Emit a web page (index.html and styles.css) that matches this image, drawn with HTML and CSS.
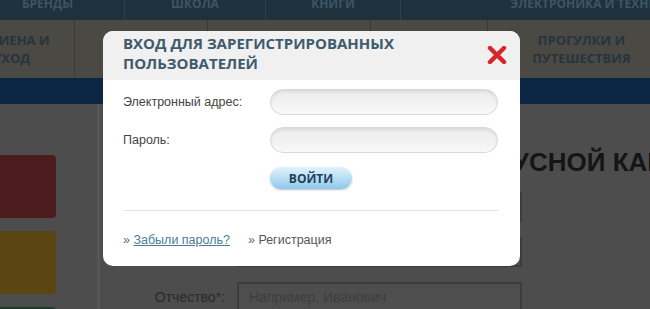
FILE: index.html
```html
<!DOCTYPE html>
<html>
<head>
    <meta charset="utf-8">
    <title>Вход</title>
    <link rel="stylesheet" href="styles.css">
</head>
<body>
    <!-- Верхнее меню -->
    <nav class="topnav">
        <a href="#">Бренды</a>
        <a href="#">Школа</a>
        <a href="#">Книги</a>
        <a href="#">Электроника и техника</a>
    </nav>

    <!-- Категории -->
    <nav class="catnav">
        <a href="#">Гигиена и<br>уход</a>
        <a href="#"></a>
        <a href="#"></a>
        <a href="#"></a>
        <a href="#">Прогулки и<br>путешествия</a>
    </nav>

    <div class="strip"></div>

    <div class="content">
        <aside class="side">
            <div class="tile tile-red"></div>
            <div class="tile tile-yellow"></div>
            <div class="tile tile-green"></div>
        </aside>

        <main class="reg">
            <h1>Регистрация вкусной карты</h1>
            <div class="field">
                <label>Фамилия*:</label>
                <input type="text" placeholder="Например, Иванов">
            </div>
            <div class="field">
                <label>Имя*:</label>
                <input type="text" placeholder="Например, Иван">
            </div>
            <div class="field">
                <label>Отчество*:</label>
                <input type="text" placeholder="Например, Иванович">
            </div>
        </main>
    </div>

    <!-- Окно входа -->
    <div class="modal">
        <div class="modal-head">
            <h2>Вход для зарегистрированных<br>пользователей</h2>
            <svg class="close" width="20" height="18" viewBox="0 0 20 18">
                <path d="M3 2 L17 16 M17 2 L3 16" stroke="#d8262c" stroke-width="4.5" stroke-linecap="round"/>
            </svg>
        </div>
        <div class="modal-body">
            <div class="rows">
                <div class="row">
                    <label>Электронный адрес:</label>
                    <input type="text">
                </div>
                <div class="row">
                    <label>Пароль:</label>
                    <input type="password">
                </div>
            </div>
            <div class="actions">
                <button class="btn">Войти</button>
            </div>
            <div class="sep"></div>
            <div class="links">
                <span><span class="raquo">»</span> <a href="#">Забыли пароль?</a></span>
                <span><span class="raquo">»</span> Регистрация</span>
            </div>
        </div>
    </div>
</body>
</html>
```

FILE: styles.css
```css
html {
    background-color: #4d4d4d;
}

body {
    margin: 0;
    width: 650px;
    height: 309px;
    overflow: hidden;
    position: relative;
    background-color: #4d4d4d;
    font-family: "Liberation Sans", Arial, sans-serif;
}

/* Верхнее меню */
.topnav {
    display: grid;
    grid-template-columns: 154px 141px 135px 384px;
    height: 20px;
    margin-left: -30px;
    background-color: #1d323c;
}

.topnav a {
    display: flex;
    justify-content: center;
    border-left: 1px solid #2b424e;
    color: #3d5664;
    font: 700 12px/8px "Open Sans", sans-serif;
    text-transform: uppercase;
    text-decoration: none;
    white-space: nowrap;
}

/* Категории */
.catnav {
    display: grid;
    grid-template-columns: 126px 133px 163px 117px 188px;
    height: 58px;
    margin-left: -52px;
    background-color: #4a4943;
}

.catnav a {
    display: flex;
    align-items: center;
    justify-content: center;
    text-align: center;
    border-left: 1px solid #3a3a36;
    color: #27343d;
    font: 700 13px/18px "Open Sans", sans-serif;
    text-transform: uppercase;
    text-decoration: none;
}

.strip {
    height: 26px;
    background-color: #0b2642;
}

.content {
    display: flex;
}

.side {
    width: 56px;
    flex: none;
    padding-top: 51px;
    display: flex;
    flex-direction: column;
    gap: 13px;
}

.tile {
    height: 63px;
    border-radius: 0 4px 4px 0;
}

.tile-red { background-color: #4b1b1e; }
.tile-yellow { background-color: #5b4611; }
.tile-green { background-color: #1c3d2c; }

.reg {
    flex: 1;
    margin-left: 41px;
    padding-top: 43px;
    border-left: 3px solid #575757;
}

.reg h1 {
    margin: 0 0 14px;
    padding-left: 178px;
    font: 700 26px/31px "Liberation Sans", Arial, sans-serif;
    color: #151515;
    text-transform: uppercase;
    white-space: nowrap;
}

.field {
    display: grid;
    grid-template-columns: 125px 285px;
    gap: 12px;
    align-items: center;
    margin-bottom: 15px;
}

.field label {
    text-align: right;
    font-size: 14px;
    color: #2a2a2a;
}

.field input {
    height: 30px;
    box-sizing: border-box;
    border: 2px solid #3c3c3c;
    background-color: #4e4e4e;
    padding: 0 10px;
    font: 14px "Liberation Sans", Arial, sans-serif;
}

.field input::placeholder {
    color: #3e3e3e;
}

/* Окно входа */
.modal {
    position: absolute;
    left: 103px;
    top: 31px;
    width: 417px;
    height: 235px;
    background-color: #fff;
    border-radius: 10px;
    overflow: hidden;
}

.modal-head {
    display: flex;
    justify-content: space-between;
    align-items: flex-start;
    height: 49px;
    box-sizing: border-box;
    padding: 2px 13px 0 20px;
    background-color: #f0f0f0;
}

.modal-head h2 {
    margin: 0;
    font: 700 15px/20px "Open Sans", sans-serif;
    color: #3e5a6d;
    text-transform: uppercase;
}

.close {
    margin-top: 13px;
}

.modal-body {
    padding: 9px 22px 0 20px;
}

.rows {
    display: flex;
    flex-direction: column;
    gap: 12px;
}

.row {
    display: grid;
    grid-template-columns: 147px 228px;
    align-items: center;
}

.row label {
    font-size: 12.5px;
    color: #444;
}

.row input {
    height: 26px;
    box-sizing: border-box;
    border: 1px solid #d8d8d8;
    border-radius: 13px;
    background: linear-gradient(#ebebeb, #f8f8f8);
    box-shadow: inset 0 2px 3px rgba(0, 0, 0, 0.08);
}

.actions {
    padding-left: 147px;
    margin-top: 14px;
}

.btn {
    display: block;
    width: 82px;
    height: 22px;
    border: 0;
    border-radius: 11px;
    background: linear-gradient(#e2f2fb, #b4dcf2 55%, #8fc7ea);
    box-shadow: 0 1px 2px rgba(0, 0, 0, 0.25);
    color: #22405c;
    font: 700 12px "Open Sans", sans-serif;
    text-transform: uppercase;
}

.sep {
    margin-top: 21px;
    border-top: 1px solid #e3e3e3;
}

.links {
    display: flex;
    gap: 18px;
    margin-top: 22px;
    font-size: 12.5px;
    line-height: 14px;
    color: #555;
}

.links a {
    color: #4d7c98;
}

.raquo {
    color: #666;
}
```
